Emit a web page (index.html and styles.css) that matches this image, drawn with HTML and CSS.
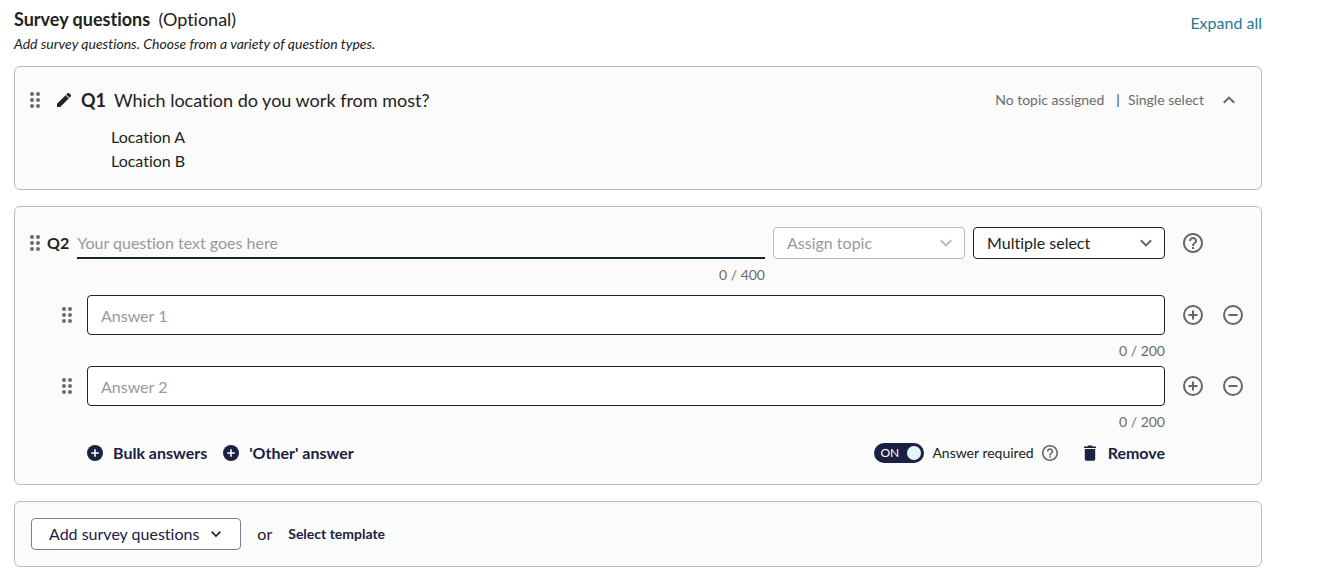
FILE: index.html
```html
<!DOCTYPE html>
<html lang="en">
<head>
  <meta charset="UTF-8" />
  <title>Survey questions</title>
  <meta name="viewport" content="width=device-width, initial-scale=1.0"/>
  <link rel="stylesheet" href="styles.css">
</head>
<body>

  <!-- Shared icons -->
  <svg class="icon-defs" aria-hidden="true">
    <symbol id="icon-drag" viewBox="0 0 10 16">
      <circle cx="2" cy="2" r="2"/><circle cx="8" cy="2" r="2"/>
      <circle cx="2" cy="8" r="2"/><circle cx="8" cy="8" r="2"/>
      <circle cx="2" cy="14" r="2"/><circle cx="8" cy="14" r="2"/>
    </symbol>
    <symbol id="icon-help" viewBox="0 0 24 24">
      <path d="M11 18h2v-2h-2v2zm1-16C6.48 2 2 6.48 2 12s4.48 10 10 10 10-4.48 10-10S17.52 2 12 2zm0 18c-4.41 0-8-3.59-8-8s3.59-8 8-8 8 3.59 8 8-3.59 8-8 8zm0-14c-2.21 0-4 1.79-4 4h2c0-1.1.9-2 2-2s2 .9 2 2c0 2-3 1.75-3 5h2c0-2.25 3-2.5 3-5 0-2.21-1.79-4-4-4z"/>
    </symbol>
    <symbol id="icon-plus" viewBox="0 0 24 24">
      <path d="M12 7.5v9M7.5 12h9" fill="none" stroke="currentColor" stroke-width="2"/>
      <circle cx="12" cy="12" r="9" fill="none" stroke="currentColor" stroke-width="2"/>
    </symbol>
    <symbol id="icon-minus" viewBox="0 0 24 24">
      <path d="M7.5 12h9" fill="none" stroke="currentColor" stroke-width="2"/>
      <circle cx="12" cy="12" r="9" fill="none" stroke="currentColor" stroke-width="2"/>
    </symbol>
    <symbol id="icon-plus-solid" viewBox="0 0 16 16">
      <circle cx="8" cy="8" r="8"/>
      <path d="M8 4.2v7.6M4.2 8h7.6" fill="none" stroke="#fff" stroke-width="1.6"/>
    </symbol>
    <symbol id="icon-down" viewBox="0 0 12 12">
      <path d="M.8 3.2L6 8.4l5.2-5.2" fill="none" stroke="currentColor" stroke-width="2"/>
    </symbol>
  </svg>

  <main class="survey">
    <header class="survey-header">
      <div>
        <h2>Survey questions <span class="optional">(Optional)</span></h2>
        <p class="hint">Add survey questions. Choose from a variety of question types.</p>
      </div>
      <a class="expand" href="#">Expand all</a>
    </header>

    <section class="card question">
      <div class="question-row">
        <svg class="drag"><use href="#icon-drag"/></svg>
        <button class="icon-btn edit" aria-label="Edit question">
          <svg class="icon-sm" viewBox="3 3 18 18"><path d="M3 17.25V21h3.75L17.81 9.94l-3.75-3.75L3 17.25zM20.71 7.04a1 1 0 0 0 0-1.41l-2.34-2.34a1 1 0 0 0-1.41 0l-1.83 1.83 3.75 3.75 1.83-1.83z" stroke="currentColor" stroke-width=".6"/></svg>
        </button>
        <h3><strong>Q1</strong>Which location do you work from most?</h3>
        <div class="meta">
          <span>No topic assigned</span>
          <span class="divider">|</span>
          <span>Single select</span>
        </div>
        <button class="icon-btn collapse" aria-label="Collapse question">
          <svg class="chevron up"><use href="#icon-down"/></svg>
        </button>
      </div>
      <ul class="options">
        <li>Location A</li>
        <li>Location B</li>
      </ul>
    </section>

    <section class="card editor">
      <div class="editor-row">
        <svg class="drag"><use href="#icon-drag"/></svg>
        <label class="number" for="q2">Q2</label>
        <div class="field">
          <input class="question-input" id="q2" type="text" placeholder="Your question text goes here" maxlength="400">
          <span class="counter">0 / 400</span>
        </div>
        <div class="select muted">
          <select aria-label="Assign topic">
            <option>Assign topic</option>
          </select>
          <svg class="chevron"><use href="#icon-down"/></svg>
        </div>
        <div class="select">
          <select aria-label="Question type">
            <option>Multiple select</option>
            <option>Single select</option>
          </select>
          <svg class="chevron"><use href="#icon-down"/></svg>
        </div>
        <div class="tools">
          <button class="icon-btn" aria-label="Help"><svg class="icon"><use href="#icon-help"/></svg></button>
        </div>
      </div>

      <div class="answers">
        <div class="answer">
          <svg class="drag"><use href="#icon-drag"/></svg>
          <div class="field">
            <input class="answer-input" type="text" placeholder="Answer 1" aria-label="Answer 1" maxlength="200">
            <span class="counter">0 / 200</span>
          </div>
          <div class="tools">
            <button class="icon-btn" aria-label="Add answer"><svg class="icon"><use href="#icon-plus"/></svg></button>
            <button class="icon-btn" aria-label="Remove answer"><svg class="icon"><use href="#icon-minus"/></svg></button>
          </div>
        </div>
        <div class="answer">
          <svg class="drag"><use href="#icon-drag"/></svg>
          <div class="field">
            <input class="answer-input" type="text" placeholder="Answer 2" aria-label="Answer 2" maxlength="200">
            <span class="counter">0 / 200</span>
          </div>
          <div class="tools">
            <button class="icon-btn" aria-label="Add answer"><svg class="icon"><use href="#icon-plus"/></svg></button>
            <button class="icon-btn" aria-label="Remove answer"><svg class="icon"><use href="#icon-minus"/></svg></button>
          </div>
        </div>
      </div>

      <div class="actions">
        <button class="text-btn"><svg class="icon-md"><use href="#icon-plus-solid"/></svg>Bulk answers</button>
        <button class="text-btn"><svg class="icon-md"><use href="#icon-plus-solid"/></svg>'Other' answer</button>
        <div class="required">
          <span class="toggle">
            <input type="checkbox" role="switch" id="required" checked>
            <span class="toggle-text">ON</span>
          </span>
          <label for="required">Answer required</label>
          <button class="icon-btn" aria-label="About required answers"><svg class="icon-md" viewBox="2 2 20 20"><use href="#icon-help" width="24" height="24"/></svg></button>
        </div>
        <button class="text-btn remove"><svg class="trash" viewBox="0 0 12 16"><path d="M4 .5h4l.6.9H12V3H0V1.400h3.400zM.8 4h10.400v10c0 1-.8 1.800-1.800 1.800H2.600c-1 0-1.800-.8-1.800-1.800z"/></svg>Remove</button>
      </div>
    </section>

    <section class="card add">
      <button class="add-btn">Add survey questions<svg class="chevron small"><use href="#icon-down"/></svg></button>
      <span>or</span>
      <button class="text-btn template">Select template</button>
    </section>
  </main>

</body>
</html>
```
FILE: styles.css
```css
* {
  box-sizing: border-box;
}

body {
  margin: 0;
  font-family: Lato, sans-serif;
  font-size: 16px;
  line-height: 24px;
  font-variant-ligatures: none;
  color: #222;
  background-color: #fff;
}

h2, h3, p, ul {
  margin: 0;
  padding: 0;
}

button, input, select {
  font: inherit;
  font-variant-ligatures: none;
  color: inherit;
}

button {
  display: flex;
  align-items: center;
  padding: 0;
  border: none;
  background: none;
  cursor: pointer;
}

svg {
  display: block;
  flex: none;
  fill: currentColor;
}

.icon-defs {
  display: none;
}

.survey {
  display: flex;
  flex-direction: column;
  gap: 16px;
  padding: 7px 67px 20px 14px;
}

.survey-header {
  display: flex;
  justify-content: space-between;
  align-items: flex-start;
  margin-bottom: -4px;
}

h2 {
  font-size: 18px;
}

.optional {
  margin-left: 4px;
  font-weight: normal;
}

.hint {
  margin-top: 3px;
  font-size: 14px;
  line-height: 20px;
  font-style: italic;
}

.expand {
  padding-top: 4px;
  color: #1f7a94;
  text-decoration: none;
}

.card {
  border: 1px solid #bbb;
  border-radius: 6px;
  background-color: #fbfbfb;
}

/* Icons */
.drag {
  width: 10px;
  height: 16px;
  color: #6b6b6b;
}

.icon {
  width: 24px;
  height: 24px;
}

.icon-md {
  width: 16px;
  height: 16px;
}

.icon-sm {
  width: 14px;
  height: 14px;
}

.trash {
  width: 12px;
  height: 16px;
}

.chevron {
  width: 12px;
  height: 12px;
  color: #666;
}

.chevron.small {
  width: 10px;
  height: 10px;
  color: #1a2142;
}

.up {
  transform: rotate(180deg);
}

.icon-btn {
  color: #666;
}

/* Collapsed question */
.question {
  padding: 16px 26px 16px 15px;
}

.question-row {
  display: flex;
  align-items: center;
  min-height: 34px;
}

.edit {
  margin: 0 10px 0 17px;
  color: #222;
}

h3 {
  font-size: 18px;
  font-weight: normal;
}

h3 strong {
  margin-right: 8px;
}

.meta {
  display: flex;
  gap: 8px;
  margin-left: auto;
  font-size: 14px;
  color: #6b6b6b;
}

.divider {
  margin-left: 4px;
  color: #444;
}

.collapse {
  margin-left: 19px;
}

.options {
  margin-top: 8px;
  padding-left: 81px;
  list-style: none;
}

/* Question editor */
.editor {
  padding: 20px 16px 19px 15px;
}

.editor-row {
  display: flex;
  gap: 8px;
}

.editor-row .drag {
  margin-top: 8px;
}

.editor-row .tools {
  margin-top: 4px;
}

.number {
  margin-left: -1px;
  line-height: 32px;
  font-weight: bold;
}

.field {
  flex: 1;
  display: flex;
  flex-direction: column;
}

.question-input {
  width: 100%;
  height: 32px;
  padding: 0;
  border: none;
  border-bottom: 2px solid #1a2533;
  outline: none;
  background: none;
}

input::placeholder {
  color: #999;
  opacity: 1;
}

.counter {
  margin-top: 6px;
  font-size: 14px;
  line-height: 20px;
  text-align: right;
  color: #6b6b6b;
}

.select {
  position: relative;
  width: 192px;
}

.select select {
  width: 100%;
  height: 32px;
  padding: 0 32px 0 13px;
  border: 1px solid #222;
  border-radius: 4px;
  appearance: none;
  background-color: #fff;
}

.select .chevron {
  position: absolute;
  top: 10px;
  right: 13px;
  pointer-events: none;
}

.muted select {
  border-color: #bbb;
  color: #999;
}

.muted .chevron {
  color: #bbb;
}

.tools {
  display: flex;
  align-items: flex-start;
  gap: 16px;
  width: 72px;
  padding-left: 8px;
}

.answers {
  display: flex;
  flex-direction: column;
  gap: 5px;
  margin-top: 10px;
  padding-left: 32px;
}

.answer {
  display: flex;
}

.answer .drag {
  margin: 12px 15px 0 0;
}

.answer .tools {
  width: 80px;
  padding: 8px 0 0 16px;
}

.answer-input {
  width: 100%;
  height: 40px;
  padding: 0 13px;
  border: 1px solid #222;
  border-radius: 4px;
  background-color: #fff;
}

.actions {
  display: flex;
  align-items: center;
  gap: 16px;
  margin-top: 9px;
  padding: 0 80px 0 57px;
}

.text-btn {
  gap: 10px;
  font-weight: bold;
  color: #1a2142;
}

.remove {
  gap: 12px;
}

.required {
  display: flex;
  align-items: center;
  gap: 8px;
  margin: 0 10px 0 auto;
  font-size: 14px;
}

.toggle {
  position: relative;
  width: 50px;
  height: 20px;
}

.toggle input {
  display: flex;
  justify-content: flex-end;
  align-items: center;
  width: 100%;
  height: 100%;
  margin: 0;
  padding: 0 3px;
  border-radius: 10px;
  appearance: none;
  background-color: #1a2142;
  cursor: pointer;
}

.toggle input::after {
  content: "";
  width: 14px;
  height: 14px;
  border-radius: 50%;
  background-color: #e4f6fd;
}

.toggle-text {
  position: absolute;
  top: 0;
  left: 6px;
  font-size: 12px;
  line-height: 20px;
  color: #fff;
  pointer-events: none;
}

/* Add question bar */
.add {
  display: flex;
  align-items: center;
  gap: 16px;
  padding: 16px;
}

.add-btn {
  gap: 12px;
  height: 32px;
  padding: 0 19px 0 17px;
  border: 1px solid #7b8090;
  border-radius: 4px;
  background-color: #fff;
  color: #1a2142;
}

.template {
  font-size: 14px;
}
```
